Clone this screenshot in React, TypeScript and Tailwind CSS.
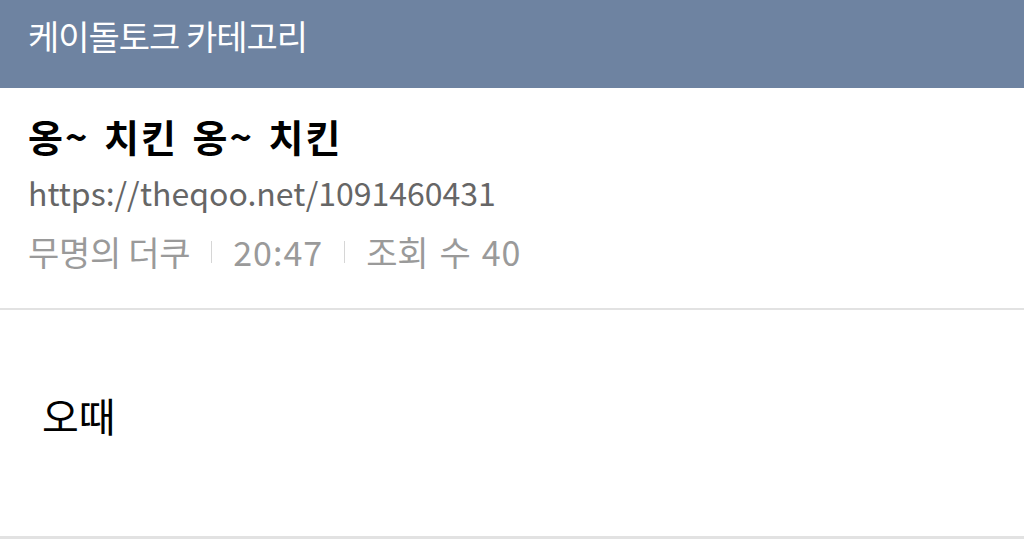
export default function App() {
  return (
    <div className="w-[1024px] h-[539px] bg-white overflow-hidden flex flex-col" style={{ fontFamily: '"Noto Sans CJK KR", "Noto Sans", sans-serif' }}>
      <header className="h-[88px] bg-[#6e83a1] flex items-center px-[28px] pb-[16px]">
        <h1 className="text-white text-[34px] font-normal leading-none tracking-[-1px]">케이돌토크 카테고리</h1>
      </header>

      <section className="px-[28px] pt-[29px] h-[222px] border-b-2 border-[#e2e2e2]">
        <h2 className="text-[38px] font-bold text-black leading-none tracking-[2px] [word-spacing:4px]">옹~ 치킨 옹~ 치킨</h2>
        <p className="mt-[21px] text-[32px] text-[#666666] leading-none">https://theqoo.net/1091460431</p>
        <div className="mt-[27px] flex items-center text-[34px] text-[#9a9a9a] leading-none tracking-[-0.3px]">
          <span>무명의 더쿠</span>
          <span className="mx-[21px] w-px h-[22px] bg-[#d6d6d6]" />
          <span className="tracking-[1px]">20:47</span>
          <span className="mx-[21px] w-px h-[22px] bg-[#d6d6d6]" />
          <span className="[word-spacing:4px]">
            조회 수 <span className="tracking-[1px]">40</span>
          </span>
        </div>
      </section>

      <main className="flex-1 px-[42px] pt-[85px] border-b-[3px] border-[#e2e2e2]">
        <p className="text-[40px] text-black leading-none">오때</p>
      </main>
    </div>
  );
}
